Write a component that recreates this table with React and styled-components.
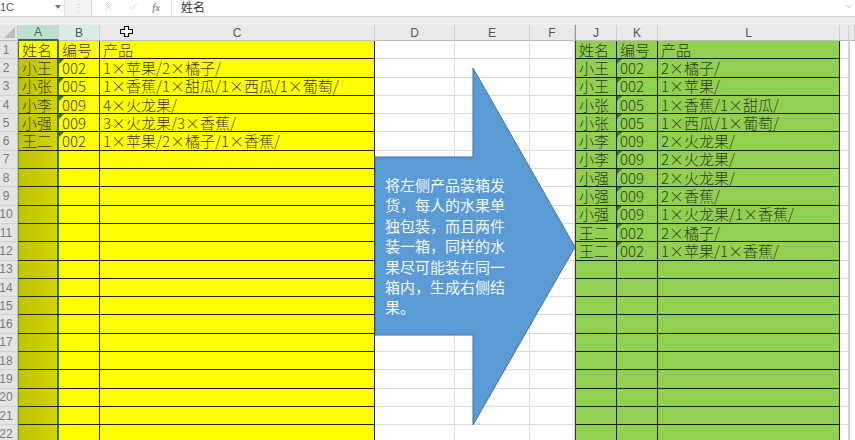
import React from 'react';
import styled, { createGlobalStyle, css } from 'styled-components';
import { X, Check, ChevronDown } from 'lucide-react';

const GlobalStyle = createGlobalStyle`
  html, body { margin: 0; padding: 0; background: #fff; overflow: hidden; }
  body { font-family: "Noto Sans CJK SC", "Liberation Sans", sans-serif; }
  #root { width: 855px; height: 440px; }
`;

const COLS = [18, 41, 41, 275, 80, 75, 45, 1, 41, 41, 182, 9, 6];
const HEADERS = ['', 'A', 'B', 'C', 'D', 'E', 'F', '', 'J', 'K', 'L', '', ''];
const ROW_COUNT = 22;

const LEFT = [
  ['姓名', '编号', '产品'],
  ['小王', '002', '1×苹果/2×橘子/'],
  ['小张', '005', '1×香蕉/1×甜瓜/1×西瓜/1×葡萄/'],
  ['小李', '009', '4×火龙果/'],
  ['小强', '009', '3×火龙果/3×香蕉/'],
  ['王二', '002', '1×苹果/2×橘子/1×香蕉/'],
];

const RIGHT = [
  ['姓名', '编号', '产品'],
  ['小王', '002', '2×橘子/'],
  ['小王', '002', '1×苹果/'],
  ['小张', '005', '1×香蕉/1×甜瓜/'],
  ['小张', '005', '1×西瓜/1×葡萄/'],
  ['小李', '009', '2×火龙果/'],
  ['小李', '009', '2×火龙果/'],
  ['小强', '009', '2×火龙果/'],
  ['小强', '009', '2×香蕉/'],
  ['小强', '009', '1×火龙果/1×香蕉/'],
  ['王二', '002', '2×橘子/'],
  ['王二', '002', '1×苹果/1×香蕉/'],
];

const ARROW_LINES = [
  '将左侧产品装箱发',
  '货，每人的水果单',
  '独包装，而且两件',
  '装一箱，同样的水',
  '果尽可能装在同一',
  '箱内，生成右侧结',
  '果。',
];

const Page = styled.div`
  position: relative;
  width: 855px;
  height: 440px;
  overflow: hidden;
  display: flex;
  flex-direction: column;
  background: #fff;
`;

const FormulaBar = styled.div`
  height: 17px;
  flex: none;
  display: flex;
  align-items: stretch;
  background: #fff;
  border-bottom: 1px solid #d6d6d6;
  box-sizing: border-box;
`;

const NameBox = styled.div`
  width: 65px;
  display: flex;
  align-items: center;
  justify-content: space-between;
  padding: 0 3px 3px 0;
  box-sizing: border-box;
  font-family: "Liberation Sans", sans-serif;
  font-size: 11px;
  color: #555;
  border-right: 1px solid #e2e2e2;
`;

const Grip = styled.div`
  width: 26px;
  background: #f3f3f3;
  display: flex;
  align-items: center;
  justify-content: center;
  padding-bottom: 3px;
  box-sizing: border-box;
  color: #c4c4c4;
  font-size: 11px;
`;

const FxButtons = styled.div`
  width: 81px;
  display: flex;
  align-items: center;
  justify-content: space-around;
  padding: 0 4px 3px 4px;
  box-sizing: border-box;
  border-left: 1px solid #e2e2e2;
  border-right: 1px solid #dcdcdc;
  color: #b8b8b8;
`;

const Fx = styled.span`
  font-family: "Liberation Serif", serif;
  font-style: italic;
  font-size: 11px;
  color: #6a6a6a;
`;

const FormulaInput = styled.div`
  flex: 1;
  display: flex;
  align-items: center;
  justify-content: space-between;
  padding: 0 2px 3px 9px;
  box-sizing: border-box;
  font-size: 12px;
  line-height: 13px;
  color: #333;
`;

const Strip = styled.div`
  height: 8px;
  flex: none;
  background: #ececec;
`;

const Sheet = styled.div`
  flex: 1;
  display: grid;
  grid-template-columns: ${COLS.map((c) => `${c}px`).join(' ')};
  grid-template-rows: 16px;
  grid-auto-rows: 18.3px;
  overflow: hidden;
`;

const Corner = styled.div`
  background: #e6e6e6;
  border-right: 1px solid #c8c8c8;
  border-bottom: 1px solid #bdbdbd;
  box-sizing: border-box;
  display: flex;
  align-items: flex-end;
  justify-content: flex-end;
  padding: 0 2px 2px 0;
`;

const ColHead = styled.div`
  box-sizing: border-box;
  display: flex;
  align-items: center;
  justify-content: center;
  font-family: "Liberation Sans", sans-serif;
  font-size: 12px;
  color: #555;
  background: #eaeaea;
  border-right: 1px solid #cfcfcf;
  border-bottom: 1px solid #bdbdbd;
  ${(p) =>
    p.$state === 'sel' &&
    css`
      background: #bfe0cc;
      color: #3b6a4f;
      border-bottom: 2px solid #2e7048;
    `}
  ${(p) =>
    p.$state === 'near' &&
    css`
      background: #d9ede6;
    `}
  ${(p) =>
    p.$state === 'hidden' &&
    css`
      background: #9a9a9a;
      border: none;
    `}
`;

const RowHead = styled.div`
  box-sizing: border-box;
  display: flex;
  align-items: center;
  justify-content: center;
  padding-right: 5px;
  font-family: "Liberation Sans", sans-serif;
  font-size: 12px;
  color: #7a7a7a;
  background: #e4e4e4;
  border-right: 1px solid #b9c2bc;
  border-bottom: 1px solid #d2d2d2;
  overflow: visible;
  white-space: nowrap;
`;

const kinds = {
  active: css`
    background: #ffff00;
    color: #3a3a3a;
    border-left: 1px solid #3d7a44;
    border-right: 2px solid #3d6e3d;
    border-bottom: 1px solid #222;
  `,
  olive: css`
    background: linear-gradient(90deg, #bfc200, #d2d500);
    color: #3b3b05;
    border-left: 1px solid #6d9a5a;
    border-right: 2px solid #3d6e3d;
    border-bottom: 1px solid #2a2a00;
  `,
  yellow: css`
    background: #ffff00;
    color: #3a3a3a;
    border-right: 1px solid #1e1e1e;
    border-bottom: 1px solid #1e1e1e;
  `,
  green: css`
    background: #92d050;
    color: #2e3a26;
    border-right: 1px solid #1e1e1e;
    border-bottom: 1px solid #1e1e1e;
  `,
  white: css`
    background: #fff;
    border-right: 1px solid #dadada;
    border-bottom: 1px solid #dadada;
  `,
  hidden: css`
    background: #3a3a3a;
  `,
  edge: css`
    background: #fff;
    border-left: 1px solid #c8c8c8;
  `,
};

const Cell = styled.div`
  position: relative;
  box-sizing: border-box;
  display: flex;
  align-items: center;
  padding-left: 3px;
  font-size: 15px;
  font-weight: 300;
  line-height: 18px;
  white-space: nowrap;
  overflow: visible;
  ${(p) => kinds[p.$kind]}
  ${(p) =>
    p.$flag &&
    css`
      &::before {
        content: '';
        position: absolute;
        top: 0;
        left: 0;
        border-top: 5px solid #2f7d32;
        border-right: 5px solid transparent;
      }
    `}
`;

const Times = styled.span`
  display: inline-block;
  width: 1em;
  text-align: center;
`;

const ArrowShape = styled.svg`
  position: absolute;
  left: 374px;
  top: 66px;
  width: 204px;
  height: 362px;
  overflow: visible;
`;

const ArrowLabel = styled.div`
  position: absolute;
  left: 385px;
  top: 175px;
  font-size: 15px;
  line-height: 20.4px;
  color: #f5f8fc;
  white-space: nowrap;
`;

const Line = styled.div``;

const Cursor = styled.svg`
  position: absolute;
  left: 120px;
  top: 26px;
  width: 13px;
  height: 11px;
`;

function renderText(s) {
  if (!s) return null;
  const parts = s.split('×');
  return parts.map((p, i) => (
    <React.Fragment key={i}>
      {i > 0 && <Times>×</Times>}
      {p}
    </React.Fragment>
  ));
}

function colState(i) {
  if (i === 1) return 'sel';
  if (i === 2) return 'near';
  if (i === 7) return 'hidden';
  return undefined;
}

export default function App() {
  const rows = Array.from({ length: ROW_COUNT }, (_, i) => i);
  return (
    <Page>
      <GlobalStyle />
      <FormulaBar>
        <NameBox>
          <span>1C</span>
          <svg width="6" height="4" viewBox="0 0 6 4">
            <path d="M0 0 L6 0 L3 4 Z" fill="#777" />
          </svg>
        </NameBox>
        <Grip>⋮</Grip>
        <FxButtons>
          <X size={11} strokeWidth={1.5} />
          <Check size={11} strokeWidth={1.5} />
          <Fx>fx</Fx>
        </FxButtons>
        <FormulaInput>
          <span>姓名</span>
          <ChevronDown size={9} color="#999" />
        </FormulaInput>
      </FormulaBar>
      <Strip />
      <Sheet>
        {HEADERS.map((h, i) =>
          i === 0 ? (
            <Corner key="corner">
              <svg width="11" height="11" viewBox="0 0 11 11">
                <path d="M0 11 L11 11 L11 0 Z" fill="#bdbdbd" />
              </svg>
            </Corner>
          ) : (
            <ColHead key={`h${i}`} $state={colState(i)}>
              {h}
            </ColHead>
          )
        )}
        {rows.map((r) => {
          const l = LEFT[r] || [];
          const g = RIGHT[r] || [];
          return (
            <React.Fragment key={r}>
              <RowHead>{r + 1}</RowHead>
              <Cell $kind={r === 0 ? 'active' : 'olive'}>{l[0]}</Cell>
              <Cell $kind="yellow" $flag={r > 0 && !!l[1]}>{l[1]}</Cell>
              <Cell $kind="yellow">{renderText(l[2])}</Cell>
              <Cell $kind="white" />
              <Cell $kind="white" />
              <Cell $kind="white" />
              <Cell $kind="hidden" />
              <Cell $kind="green">{g[0]}</Cell>
              <Cell $kind="green" $flag={r > 0 && !!g[1]}>{g[1]}</Cell>
              <Cell $kind="green">{renderText(g[2])}</Cell>
              <Cell $kind="white" />
              <Cell $kind="edge" />
            </React.Fragment>
          );
        })}
      </Sheet>
      <ArrowShape viewBox="0 0 204 362">
        <polygon
          points="1,91 99,91 99,2 201,181 99,359 99,269 1,269"
          fill="#5b9bd5"
          stroke="#41719c"
          strokeWidth="1"
        />
      </ArrowShape>
      <ArrowLabel>
        {ARROW_LINES.map((t) => (
          <Line key={t}>{t}</Line>
        ))}
      </ArrowLabel>
      <Cursor viewBox="0 0 13 11">
        <path
          d="M4.5 0.5 H8.5 V3.5 H12.5 V7.5 H8.5 V10.5 H4.5 V7.5 H0.5 V3.5 H4.5 Z"
          fill="#fff"
          stroke="#111"
          strokeWidth="1.2"
        />
      </Cursor>
    </Page>
  );
}
